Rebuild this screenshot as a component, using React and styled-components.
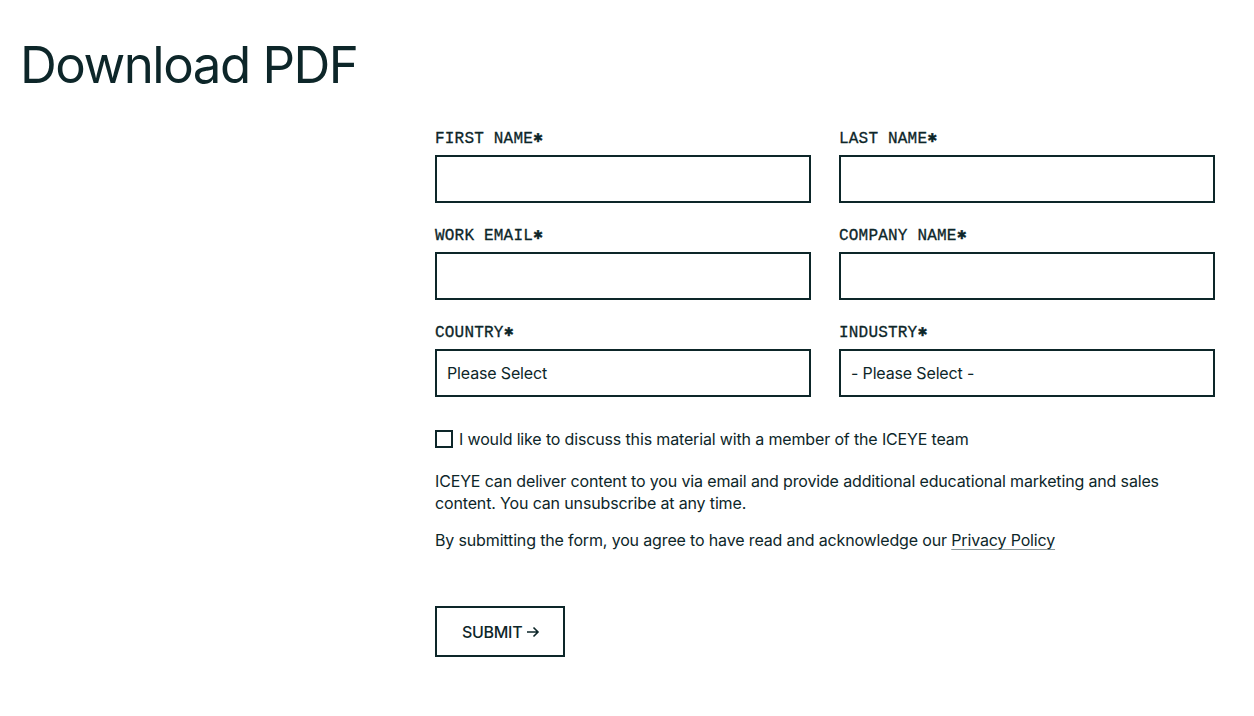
import styled, { createGlobalStyle } from "styled-components";

const ink = "#0d2629";

const GlobalStyle = createGlobalStyle`
  html, body {
    margin: 0;
    padding: 0;
    background: #fff;
    color: ${ink};
    font-family: Inter, "Noto Sans", sans-serif;
  }
  * { box-sizing: border-box; }
`;

const Page = styled.div`
  width: 1254px;
  min-height: 716px;
  padding: 39px 39px 40px 22px;
`;

const Heading = styled.h1`
  font-family: Inter, sans-serif;
  font-weight: 400;
  font-size: 51px;
  letter-spacing: -1.5px;
  line-height: 1;
  margin: 0 0 0 -2px;
`;

const Layout = styled.div`
  display: grid;
  grid-template-columns: 391px 1fr;
  column-gap: 22px;
  margin-top: 37px;
`;

const Form = styled.form`
  grid-column: 2;
  display: flex;
  flex-direction: column;
`;

const Grid = styled.div`
  display: grid;
  grid-template-columns: 1fr 1fr;
  column-gap: 28px;
  row-gap: 21px;
`;

const Field = styled.label`
  display: flex;
  flex-direction: column;
  gap: 5px;
`;

const LabelText = styled.span`
  font-family: "Liberation Mono", "DejaVu Sans Mono", monospace;
  font-size: 16px;
  line-height: 22px;
  letter-spacing: 0.2px;
  text-transform: uppercase;
  -webkit-text-stroke: 0.3px ${ink};
`;

const Star = styled.span`
  font-family: "DejaVu Sans", sans-serif;
  font-size: 12px;
  vertical-align: 1px;
`;

const Input = styled.div`
  height: 48px;
  border: 2px solid ${ink};
  padding: 0 10px;
  display: flex;
  align-items: center;
  font-size: 16px;
  letter-spacing: -0.15px;
`;

const CheckRow = styled.div`
  display: flex;
  align-items: center;
  gap: 6px;
  margin-top: 32px;
  font-size: 16px;
  letter-spacing: -0.15px;
`;

const Box = styled.span`
  width: 18px;
  height: 18px;
  border: 2px solid ${ink};
  display: inline-block;
`;

const Para = styled.p`
  margin: ${(p) => p.$top || 0}px 0 0;
  font-size: 16px;
  line-height: 22px;
  letter-spacing: -0.15px;
`;

const Link = styled.a`
  color: ${ink};
  text-decoration: underline;
  text-decoration-color: #8a9799;
  text-underline-offset: 3px;
`;

const Submit = styled.button`
  align-self: flex-start;
  margin-top: 55px;
  height: 51px;
  padding: 0 23px 0 25px;
  border: 2px solid ${ink};
  background: #fff;
  color: ${ink};
  font-family: Inter, sans-serif;
  font-weight: 500;
  font-size: 16px;
  letter-spacing: -0.3px;
  display: flex;
  align-items: center;
  gap: 4px;
`;

const fields = [
  { label: "First name" },
  { label: "Last name" },
  { label: "Work email" },
  { label: "Company name" },
  { label: "Country", value: "Please Select" },
  { label: "Industry", value: "- Please Select -" },
];

export default function App() {
  return (
    <Page>
      <GlobalStyle />
      <Heading>Download PDF</Heading>
      <Layout>
        <Form onSubmit={(e) => e.preventDefault()}>
          <Grid>
            {fields.map((f) => (
              <Field key={f.label}>
                <LabelText>
                  {f.label}
                  <Star>✱</Star>
                </LabelText>
                <Input>{f.value}</Input>
              </Field>
            ))}
          </Grid>
          <CheckRow>
            <Box />
            I would like to discuss this material with a member of the ICEYE team
          </CheckRow>
          <Para $top={21}>
            ICEYE can deliver content to you via email and provide additional educational marketing and sales
            content. You can unsubscribe at any time.
          </Para>
          <Para $top={15}>
            By submitting the form, you agree to have read and acknowledge our <Link href="#">Privacy Policy</Link>
          </Para>
          <Submit type="submit">
            SUBMIT
            <svg width="14" height="14" viewBox="0 0 14 14" fill="none" stroke={ink} strokeWidth="1.6">
              <path d="M1 7h11M7.5 2.5 12 7l-4.5 4.5" />
            </svg>
          </Submit>
        </Form>
      </Layout>
    </Page>
  );
}
